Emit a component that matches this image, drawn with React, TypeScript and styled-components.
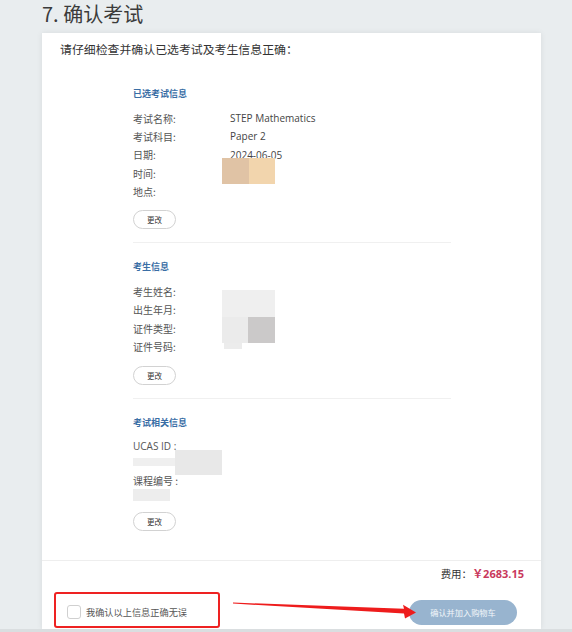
import React from "react";
import styled, { createGlobalStyle } from "styled-components";

const Global = createGlobalStyle`
  html, body { margin: 0; padding: 0; background: #e9edef; }
  body { font-family: "Open Sans", "Noto Sans CJK SC", sans-serif; color: #333; }
  * { box-sizing: border-box; }
`;

const Page = styled.div`
  position: relative;
  width: 572px;
  height: 632px;
  overflow: hidden;
  background: #e9edef;
  display: flex;
  flex-direction: column;
`;

const Title = styled.h1`
  margin: 0;
  height: 33px;
  padding: 1px 0 0 42px;
  font-family: "Noto Sans CJK SC", sans-serif;
  font-weight: 400;
  font-size: 20px;
  line-height: 26px;
  color: #3b3b3b;
`;

const Card = styled.div`
  margin-left: 42px;
  width: 499px;
  height: 596px;
  background: #fff;
  box-shadow: 0 0 6px rgba(0, 0, 0, 0.08);
  display: flex;
  flex-direction: column;
  overflow: hidden;
`;

const BottomLine = styled.div`
  height: 3px;
  background: #dadee0;
`;

const Intro = styled.p`
  margin: 0;
  padding: 8px 18px 0;
  font-family: "Noto Sans CJK SC", sans-serif;
  font-size: 11.9px;
  line-height: 16px;
  color: #333;
`;

const Content = styled.div`
  margin-left: 91px;
  width: 318px;
  padding-top: 13px;
`;

const Section = styled.section<{ $last?: boolean }>`
  padding: 17px 0 ${(p) => (p.$last ? "29px" : "13px")};
  border-bottom: ${(p) => (p.$last ? "none" : "1px solid #f0f0f0")};
`;

const SectionTitle = styled.h3`
  margin: 0 0 8px;
  font-family: "Noto Sans CJK SC", sans-serif;
  font-size: 9px;
  line-height: 14px;
  font-weight: 700;
  color: #3a6ea5;
`;

const Rows = styled.div`
  position: relative;
`;

const Row = styled.div`
  display: grid;
  grid-template-columns: 97px 1fr;
  height: 18.3px;
  align-items: center;
  font-size: 10px;
  color: #555;
`;

const Label = styled.span`
  font-family: "Noto Sans CJK SC", sans-serif;
`;

const Value = styled.span`
  color: #444;
  font-family: "Open Sans", "Noto Sans CJK SC", sans-serif;
`;

const Stack = styled.div`
  position: relative;
  display: flex;
  flex-direction: column;
  font-size: 10px;
  color: #555;
`;

const StackLine = styled.div<{ $h?: number }>`
  height: ${(p) => p.$h ?? 17}px;
  line-height: 17px;
`;

const Redact = styled.div<{ $c: string }>`
  position: absolute;
  background: ${(p) => p.$c};
  filter: blur(0.6px);
`;

const EditButton = styled.button`
  margin-top: 10px;
  width: 43px;
  height: 19px;
  border: 1px solid #d2d2d2;
  border-radius: 10px;
  background: #fff;
  font-family: "Noto Sans CJK SC", sans-serif;
  font-size: 7.5px;
  color: #333;
  padding: 0;
  display: block;
`;

const FeeRow = styled.div`
  border-top: 1px solid #eeeeee;
  padding: 6px 17px 0 0;
  display: flex;
  justify-content: flex-end;
  align-items: baseline;
  line-height: 14px;
`;

const FeeLabel = styled.span`
  font-family: "Noto Sans CJK SC", sans-serif;
  font-size: 10.5px;
  color: #333;
`;

const FeeAmount = styled.span`
  font-family: "Open Sans", "Noto Sans CJK SC", sans-serif;
  font-weight: 700;
  font-size: 11px;
  color: #c9395c;
`;

const Footer = styled.div`
  margin-top: 11px;
  display: flex;
  justify-content: space-between;
  align-items: flex-start;
  padding: 0 24px 0 12px;
`;

const ConfirmBox = styled.label`
  width: 166px;
  height: 36px;
  border: 2px solid #ee2222;
  border-radius: 3px;
  display: flex;
  align-items: flex-start;
  padding: 11px 0 0 11px;
  gap: 5px;
`;

const Check = styled.span`
  width: 14px;
  height: 14px;
  border: 1px solid #d0d0d0;
  border-radius: 3px;
  background: #fff;
`;

const CheckText = styled.span`
  font-family: "Noto Sans CJK SC", sans-serif;
  font-size: 9.2px;
  line-height: 14px;
  color: #555;
`;

const CartButton = styled.button`
  margin-top: 8px;
  width: 108px;
  height: 25px;
  border: none;
  border-radius: 13px;
  background: #98b4cf;
  color: #f2f6fa;
  font-family: "Noto Sans CJK SC", sans-serif;
  font-size: 8.2px;
  padding: 0;
`;

const Overlay = styled.svg`
  position: absolute;
  left: 0;
  top: 0;
  pointer-events: none;
`;

export default function App() {
  return (
    <>
      <Global />
      <Page>
        <Title>7. 确认考试</Title>
        <Card>
          <Intro>请仔细检查并确认已选考试及考生信息正确：</Intro>
          <Content>
            <Section>
              <SectionTitle>已选考试信息</SectionTitle>
              <Rows>
                <Row><Label>考试名称:</Label><Value>STEP Mathematics</Value></Row>
                <Row><Label>考试科目:</Label><Value>Paper 2</Value></Row>
                <Row><Label>日期:</Label><Value>2024-06-05</Value></Row>
                <Row><Label>时间:</Label><Value /></Row>
                <Row><Label>地点:</Label><Value /></Row>
                <Redact $c="#e0c3a5" style={{ left: 89, top: 49, width: 27, height: 26 }} />
                <Redact $c="#f2d5ad" style={{ left: 116, top: 49, width: 26, height: 26 }} />
              </Rows>
              <EditButton>更改</EditButton>
            </Section>
            <Section>
              <SectionTitle>考生信息</SectionTitle>
              <Rows>
                <Row><Label>考生姓名:</Label><Value /></Row>
                <Row><Label>出生年月:</Label><Value /></Row>
                <Row><Label>证件类型:</Label><Value /></Row>
                <Row><Label>证件号码:</Label><Value /></Row>
                <Redact $c="#efefef" style={{ left: 89, top: 8, width: 53, height: 27 }} />
                <Redact $c="#ebebeb" style={{ left: 89, top: 35, width: 26, height: 26 }} />
                <Redact $c="#cbc9c9" style={{ left: 115, top: 35, width: 27, height: 26 }} />
                <Redact $c="#ececec" style={{ left: 91, top: 61, width: 18, height: 6 }} />
              </Rows>
              <EditButton>更改</EditButton>
            </Section>
            <Section $last>
              <SectionTitle>考试相关信息</SectionTitle>
              <Stack>
                <StackLine>UCAS ID :</StackLine>
                <StackLine />
                <StackLine><Label>课程编号 :</Label></StackLine>
                <StackLine $h={13} />
                <Redact $c="#efefef" style={{ left: 0, top: 20, width: 44, height: 8 }} />
                <Redact $c="#e8e8e8" style={{ left: 42, top: 12, width: 47, height: 25 }} />
                <Redact $c="#ededed" style={{ left: 0, top: 51, width: 37, height: 12 }} />
              </Stack>
              <EditButton>更改</EditButton>
            </Section>
          </Content>
          <FeeRow>
            <FeeLabel>费用：</FeeLabel>
            <FeeAmount>￥2683.15</FeeAmount>
          </FeeRow>
          <Footer>
            <ConfirmBox>
              <Check />
              <CheckText>我确认以上信息正确无误</CheckText>
            </ConfirmBox>
            <CartButton>确认并加入购物车</CartButton>
          </Footer>
        </Card>
        <BottomLine />
        <Overlay width="572" height="632" viewBox="0 0 572 632">
          <polygon
            points="233,602.6 404,608.8 403,604.8 416,612.6 405,618.5 404,613.6 233,603.6"
            fill="#ee1c1c"
          />
        </Overlay>
      </Page>
    </>
  );
}
